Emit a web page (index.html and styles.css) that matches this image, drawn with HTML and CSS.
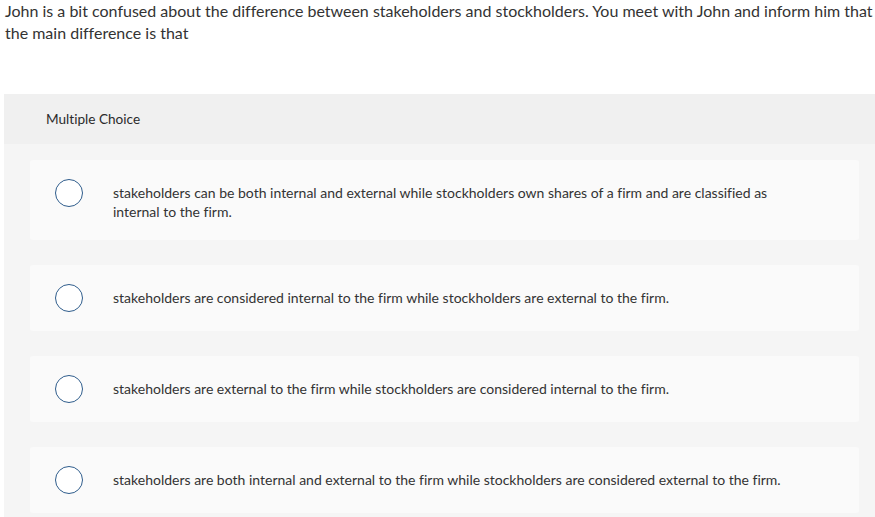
FILE: index.html
```html
<!DOCTYPE html>
<html>
<head>
<meta charset="utf-8">
<link rel="stylesheet" href="styles.css">
</head>
<body>
<p class="question">John is a bit confused about the difference between stakeholders and stockholders. You meet with John and inform him that the main difference is that</p>
<section class="panel">
  <div class="panel-head">Multiple Choice</div>
  <div class="panel-body">
    <label class="option">
      <span class="radio"></span>
      <span class="opt-text">stakeholders can be both internal and external while stockholders own shares of a firm and are classified as internal to the firm.</span>
    </label>
    <label class="option">
      <span class="radio"></span>
      <span class="opt-text">stakeholders are considered internal to the firm while stockholders are external to the firm.</span>
    </label>
    <label class="option">
      <span class="radio"></span>
      <span class="opt-text">stakeholders are external to the firm while stockholders are considered internal to the firm.</span>
    </label>
    <label class="option">
      <span class="radio"></span>
      <span class="opt-text">stakeholders are both internal and external to the firm while stockholders are considered external to the firm.</span>
    </label>
  </div>
</section>
</body>
</html>
```
FILE: styles.css
```css
html, body {
  margin: 0;
  padding: 0;
  background: #ffffff;
  overflow: hidden;
}
body {
  font-family: Lato, "Open Sans", sans-serif;
  font-variant-ligatures: none;
  color: #333333;
  width: 875px;
}
.question {
  margin: 0;
  padding: 0 2px 0 5px;
  font-size: 16px;
  line-height: 22px;
  color: #333333;
}
.panel {
  margin: 50px 0 0 4px;
  width: 881px;
}
.panel-head {
  background: #f0f0f0;
  height: 50px;
  display: flex;
  align-items: center;
  padding-left: 42px;
  font-size: 13.6px;
  color: #2b2b2b;
}
.panel-body {
  background: #f5f5f5;
  padding: 16px 26px 20px 26px;
  display: flex;
  flex-direction: column;
  gap: 25px;
}
.option {
  background: #fafafa;
  border-radius: 3px;
  padding: 19px 20px 19px 25px;
  display: flex;
  align-items: flex-start;
}
.radio {
  flex: none;
  box-sizing: border-box;
  width: 28px;
  height: 28px;
  border: 1.5px solid #2f5d8c;
  border-radius: 50%;
  background: #ffffff;
}
.opt-text {
  margin: 4px 0 0 30px;
  max-width: 680px;
  font-size: 14px;
  line-height: 19px;
  color: #333333;
}
```
